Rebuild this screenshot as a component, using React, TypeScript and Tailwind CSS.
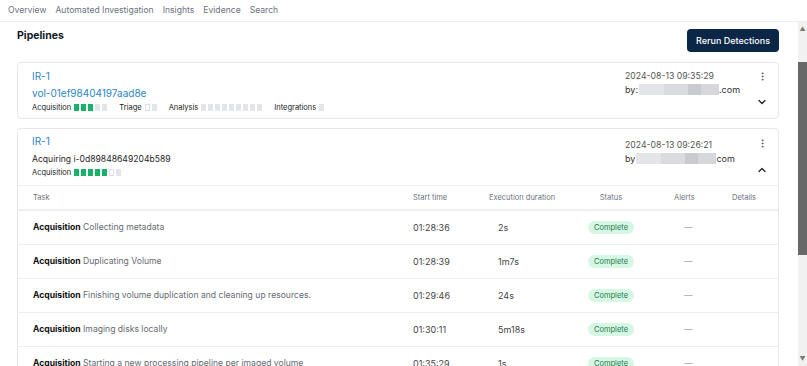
import { ChevronDown, ChevronUp, EllipsisVertical } from 'lucide-react';

type Cell = 'done' | 'todo' | 'open';

const tabs = ['Overview', 'Automated Investigation', 'Insights', 'Evidence', 'Search'];

const tasks = [
  { name: 'Collecting metadata', start: '01:28:36', dur: '2s' },
  { name: 'Duplicating Volume', start: '01:28:39', dur: '1m7s' },
  { name: 'Finishing volume duplication and cleaning up resources.', start: '01:29:46', dur: '24s' },
  { name: 'Imaging disks locally', start: '01:30:11', dur: '5m18s' },
  { name: 'Starting a new processing pipeline per imaged volume', start: '01:35:29', dur: '1s' },
];

const Stage = ({ label, cells }: { label: string; cells: Cell[] }) => (
  <div className="flex items-center gap-[3px]">
    <span className="text-[7.5px] text-[#222]">{label}</span>
    <div className="flex gap-[2px]">
      {cells.map((c, i) => (
        <span
          key={i}
          className={
            c === 'done'
              ? 'w-[5px] h-[7px] bg-[#17b26a]'
              : c === 'open'
                ? 'w-[5px] h-[7px] bg-white border border-[#dcdfe4]'
                : 'w-[5px] h-[7px] bg-[#e3e5ea]'
          }
        />
      ))}
    </div>
  </div>
);

const Owner = ({ prefix, suffix }: { prefix: string; suffix: string }) => (
  <div className="flex items-center text-[9px] text-[#333] h-[13px]">
    <span>{prefix}</span>
    <span className="flex h-[11px] ml-[1px]">
      <span className="w-[25px] bg-[#e4e5e8]" />
      <span className="w-[24px] bg-[#dadbde]" />
      <span className="w-[13px] bg-[#c9cacd]" />
      <span className="w-[18px] bg-[#d6d7da]" />
    </span>
    <span>{suffix}</span>
  </div>
);

export default function App() {
  return (
    <div className="w-[807px] h-[366px] bg-white overflow-hidden flex flex-col" style={{ fontFamily: 'Inter, "Noto Sans", sans-serif' }}>
      {/* top tabs */}
      <nav className="h-[22px] shrink-0 flex items-center gap-[9px] px-[8px] border-b border-[#eceef1] text-[8.6px] text-[#6b7280]">
        {tabs.map((t) => (
          <span key={t}>{t}</span>
        ))}
      </nav>

      <div className="flex flex-1 min-h-0">
        <main className="flex-1 pl-[17px] pr-[19px]">
          <div className="flex items-start justify-between pt-[7px]">
            <h2 className="text-[10.5px] font-bold text-[#111827] leading-[14px]">Pipelines</h2>
            <button className="h-[23px] px-[9px] rounded-[4px] bg-[#0b2748] text-white text-[9px] font-medium">Rerun Detections</button>
          </div>

          {/* card 1 */}
          <div className="border border-[#e6e8eb] rounded-[4px] flex justify-between pl-[14px] pr-[8px] pt-[6px] h-[57px] mt-[10px]">
            <div className="flex flex-col">
              <span className="text-[10px] text-[#2a86c4] leading-[14px]">IR-1</span>
              <span className="text-[10px] text-[#2a86c4] leading-[14px] mt-[3px]">vol-01ef98404197aad8e</span>
              <div className="flex items-center gap-[12px] mt-[2px]">
                <Stage label="Acquisition" cells={['done', 'done', 'done', 'todo', 'todo']} />
                <Stage label="Triage" cells={['open', 'todo']} />
                <Stage label="Analysis" cells={Array(9).fill('todo')} />
                <Stage label="Integrations" cells={['todo']} />
              </div>
            </div>
            <div className="flex">
              <div className="flex flex-col pt-[1px] w-[129px]">
                <span className="text-[8.7px] text-[#555] leading-[13px]">2024-08-13 09:35:29</span>
                <Owner prefix="by:" suffix=".com" />
              </div>
              <div className="flex flex-col items-center justify-between w-[16px] pt-[2px] pb-[10px]">
                <EllipsisVertical size={11} className="text-[#555]" />
                <ChevronDown size={12} strokeWidth={2.5} className="text-[#222]" />
              </div>
            </div>
          </div>

          {/* card 2 */}
          <div className="border border-[#e6e8eb] rounded-[4px] mt-[9px]">
            <div className="flex justify-between pl-[14px] pr-[8px] pt-[5px] h-[57px] border-b border-[#eceef1]">
              <div className="flex flex-col">
                <span className="text-[10px] text-[#2a86c4] leading-[14px]">IR-1</span>
                <span className="text-[8.6px] text-[#1f2328] leading-[14px] mt-[4px]">Acquiring i-0d89848649204b589</span>
                <div className="mt-[1px]">
                  <Stage label="Acquisition" cells={['done', 'done', 'done', 'done', 'done', 'open', 'todo']} />
                </div>
              </div>
              <div className="flex">
                <div className="flex flex-col pt-[5px] w-[129px]">
                  <span className="text-[8.7px] text-[#555] leading-[13px]">2024-08-13 09:26:21</span>
                  <Owner prefix="by" suffix="com" />
                </div>
                <div className="flex flex-col items-center justify-between w-[16px] pt-[4px] pb-[9px]">
                  <EllipsisVertical size={11} className="text-[#555]" />
                  <ChevronUp size={12} strokeWidth={2.5} className="text-[#222]" />
                </div>
              </div>
            </div>

            <div className="grid grid-cols-[380px_76px_109px_76px_58px_1fr] items-center h-[25px] text-[7.5px] text-[#6b7280] border-b-2 border-[#eef0f2] pl-[15px]">
              <span>Task</span>
              <span>Start time</span>
              <span>Execution duration</span>
              <span className="text-center w-[46px] -ml-[10px]">Status</span>
              <span>Alerts</span>
              <span>Details</span>
            </div>

            {tasks.map((t) => (
              <div key={t.start} className="grid grid-cols-[380px_76px_109px_76px_58px_1fr] items-center h-[34px] border-b border-[#eceef1] pl-[15px] text-[8.6px]">
                <span className="truncate">
                  <b className="font-bold text-[#111]">Acquisition</b> <span className="text-[#666a70]">{t.name}</span>
                </span>
                <span className="text-[#444] text-[9px]">{t.start}</span>
                <span className="text-[#444] text-[9px] pl-[9px]">{t.dur}</span>
                <span className="w-[46px] h-[13px] rounded-full bg-[#d5f7e4] text-[#1f7a4c] text-[7.5px] flex items-center justify-center -ml-[10px]">Complete</span>
                <span className="text-[#aaa] pl-[10px]">—</span>
                <span />
              </div>
            ))}
          </div>
        </main>

        {/* scrollbar */}
        <div className="w-[9px] shrink-0 bg-[#f1f1f1] flex flex-col items-center">
          <span className="text-[6px] text-[#777] leading-[10px] mt-[2px]">▲</span>
          <div className="w-full h-[193px] bg-[#686868] mt-[28px]" />
          <div className="flex-1" />
          <span className="text-[6px] text-[#777] leading-[10px] mb-[2px]">▼</span>
        </div>
      </div>
    </div>
  );
}
